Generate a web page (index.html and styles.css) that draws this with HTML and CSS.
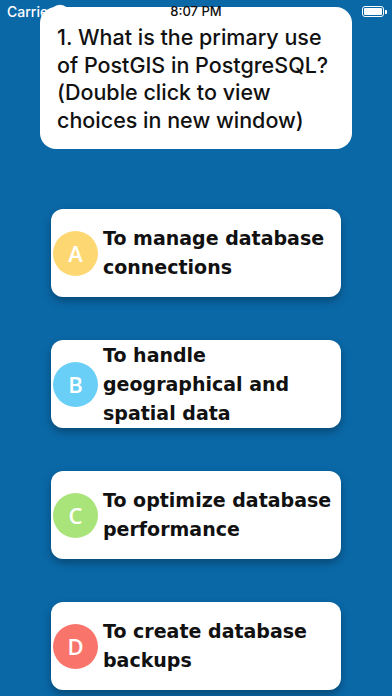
FILE: index.html
```html
<!DOCTYPE html>
<html>
<head>
<meta charset="utf-8">
<link rel="stylesheet" href="styles.css">
</head>
<body>
<div class="screen">
  <div class="status">
    <span class="carrier">Carrier</span>
    <svg class="wifi" width="16" height="12" viewBox="0 0 16 12"><path d="M8 11 L1 3.5 A10 10 0 0 1 15 3.5 Z" fill="#fff"/></svg>
    <span class="time">8:07 PM</span>
    <span class="battery"><span class="battery-fill"></span></span>
  </div>
  <div class="question">1. What is the primary use of PostGIS in PostgreSQL? (Double click to view choices in new window)</div>
  <div class="answers">
    <div class="answer"><span class="badge a">A</span><span class="text">To manage database connections</span></div>
    <div class="answer"><span class="badge b">B</span><span class="text">To handle geographical and spatial data</span></div>
    <div class="answer"><span class="badge c">C</span><span class="text">To optimize database performance</span></div>
    <div class="answer"><span class="badge d">D</span><span class="text">To create database backups</span></div>
  </div>
</div>
</body>
</html>
```
FILE: styles.css
```css
* { box-sizing: border-box; }
html, body { margin: 0; padding: 0; }
body { background: #0a68a7; width: 392px; height: 696px; overflow: hidden; font-family: Inter, "Liberation Sans", sans-serif; }
.screen { position: relative; width: 392px; height: 696px; padding-top: 7px; }
.status { position: absolute; top: 0; left: 0; width: 392px; height: 22px; z-index: 2; }
.carrier { position: absolute; left: 7px; top: 3px; color: #fff; font-size: 14px; font-weight: 500; }
.wifi { position: absolute; left: 52px; top: 4px; z-index: -1; }
.time { position: absolute; left: 0; right: 0; top: 3px; text-align: center; color: #111; font-size: 13px; font-weight: 500; }
.battery { position: absolute; left: 362px; top: 6px; width: 22px; height: 11px; border: 1.5px solid #fff; border-radius: 3px; padding: 1px; }
.battery::after { content: ""; position: absolute; right: -4px; top: 2.5px; width: 2px; height: 4px; background: #fff; border-radius: 0 1px 1px 0; }
.battery-fill { display: block; width: 100%; height: 100%; background: #fff; border-radius: 1px; }
.question { position: relative; z-index: 1; margin-left: 40px; width: 312px; height: 142px; background: #fff; border-radius: 16px; padding: 17px 20px 0 17px; font-size: 21.5px; font-weight: 500; line-height: 27.5px; color: #111; }
.answers { display: flex; flex-direction: column; gap: 43px; margin-top: 60px; margin-left: 51px; }
.answer { width: 290px; height: 88px; background: #fff; border-radius: 12px; display: flex; align-items: center; padding-left: 2px; padding-right: 1px; box-shadow: 0 4px 8px rgba(0,0,0,0.3); }
.badge { flex: none; width: 45px; height: 45px; border-radius: 50%; color: #fff; font-size: 22px; font-weight: 600; display: flex; align-items: center; justify-content: center; font-family: "Open Sans", sans-serif; }
.a { background: #fdd772; }
.b { background: #6acff6; }
.c { background: #a9e47a; }
.d { background: #f9756c; }
.text { margin-left: 5px; font-family: "DejaVu Sans", sans-serif; font-weight: 700; font-size: 19px; line-height: 29px; color: #111; }
```
